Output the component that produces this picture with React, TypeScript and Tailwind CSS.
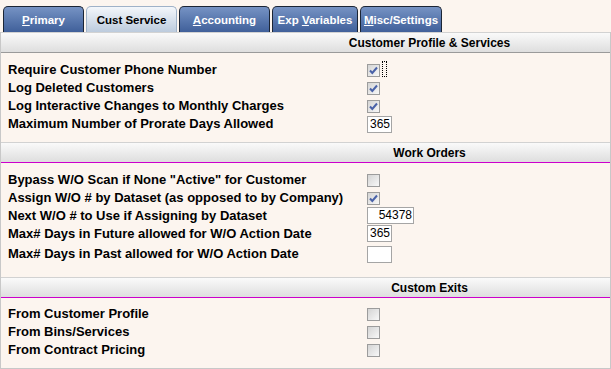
import React from "react";

const tabs = [
  { key: "P", rest: "rimary", w: "w-[81px]" },
  { key: "", rest: "Cust Service", w: "w-[91px]", active: true },
  { key: "A", rest: "ccounting", w: "w-[91px]" },
  { key: "", rest: "Exp Variables", w: "w-[86px]", under: 5 },
  { key: "M", rest: "isc/Settings", w: "w-[82px]" },
];

function Check({ checked }: { checked?: boolean }) {
  return (
    <div className="w-[13px] h-[13px] border border-[#9c9c9c] bg-gradient-to-br from-[#d4d4d4] to-[#f8f8f8] flex items-center justify-center">
      {checked && (
        <svg width="9" height="9" viewBox="0 0 9 9">
          <path d="M1 4.5 L3.3 7 L8 1.5" fill="none" stroke="#4a62a8" strokeWidth="2" />
        </svg>
      )}
    </div>
  );
}

function Box({ value, wide }: { value?: string; wide?: boolean }) {
  return (
    <div
      className={`${wide ? "w-[47px]" : "w-[25px]"} h-[17px] border border-[#a5a5a5] bg-white text-right pr-[1px] text-[12px] leading-[15px] font-normal`}
    >
      {value}
    </div>
  );
}

function Header({ title, magenta }: { title: string; magenta?: boolean }) {
  return (
    <div
      className={`h-[21px] bg-gradient-to-b from-[#fafafa] via-[#ececec] to-[#dedede] border-t border-[#d2d2d2] ${
        magenta ? "border-b border-b-[#cc00cc]" : "border-b border-b-[#9a9a9a]"
      } flex items-center pl-[248px]`}
    >
      <div className="flex-1 text-center text-[12px] font-bold text-black">{title}</div>
    </div>
  );
}

function Row({ label, h = "h-[18px]", children }: { label: string; h?: string; children?: React.ReactNode }) {
  return (
    <div className={`flex items-center ${h}`}>
      <div className="w-[366px] pl-[7px] text-[13px] font-bold text-black whitespace-nowrap">{label}</div>
      {children}
    </div>
  );
}

export default function App() {
  return (
    <div className="w-[611px] h-[369px] bg-[#fcf5ef] font-['Liberation_Sans',Arial,sans-serif] flex flex-col">
      <div className="flex gap-[2px] pl-[3px] pt-[6px] h-[32px]">
        {tabs.map((t) => (
          <div
            key={t.rest}
            className={`${t.w} h-[26px] pt-[3px] rounded-t-[5px] border flex items-center justify-center text-[11.5px] font-bold ${
              t.active
                ? "bg-gradient-to-b from-[#f4f7fb] to-[#bccbdd] border-[#9fb2c8] border-b-0 text-black"
                : "bg-gradient-to-b from-[#7693c4] to-[#40609a] border-[#1b2535] border-b-0 text-white"
            }`}
          >
            {t.under ? (
              <span>
                Exp <span className="underline">V</span>ariables
              </span>
            ) : (
              <span>
                {t.key && <span className="underline">{t.key}</span>}
                {t.rest}
              </span>
            )}
          </div>
        ))}
      </div>

      <div className="flex-1 border-l border-r border-b border-[#c8c8c8] border-t-white flex flex-col">
        <Header title="Customer Profile & Services" />
        <div className="pt-[8px] pb-[9px]">
          <Row label="Require Customer Phone Number">
            <Check checked />
            <div className="ml-[2px] w-[5px] h-[16px] border border-dotted border-black -mt-[3px]" />
          </Row>
          <Row label="Log Deleted Customers">
            <Check checked />
          </Row>
          <Row label="Log Interactive Changes to Monthly Charges">
            <Check checked />
          </Row>
          <Row label="Maximum Number of Prorate Days Allowed">
            <Box value="365" />
          </Row>
        </div>

        <Header title="Work Orders" magenta />
        <div className="pt-[8px] pb-[12px]">
          <Row label={'Bypass W/O Scan if None "Active" for Customer'}>
            <Check />
          </Row>
          <Row label="Assign W/O # by Dataset (as opposed to by Company)">
            <Check checked />
          </Row>
          <Row label="Next W/O # to Use if Assigning by Dataset" h="h-[17px]">
            <Box value="54378" wide />
          </Row>
          <Row label="Max# Days in Future allowed for W/O Action Date" h="h-[19px]">
            <Box value="365" />
          </Row>
          <Row label="Max# Days in Past allowed for W/O Action Date" h="h-[22px]">
            <Box />
          </Row>
        </div>

        <Header title="Custom Exits" magenta />
        <div className="pt-[7px]">
          <Row label="From Customer Profile">
            <Check />
          </Row>
          <Row label="From Bins/Services">
            <Check />
          </Row>
          <Row label="From Contract Pricing">
            <Check />
          </Row>
        </div>
      </div>
    </div>
  );
}
